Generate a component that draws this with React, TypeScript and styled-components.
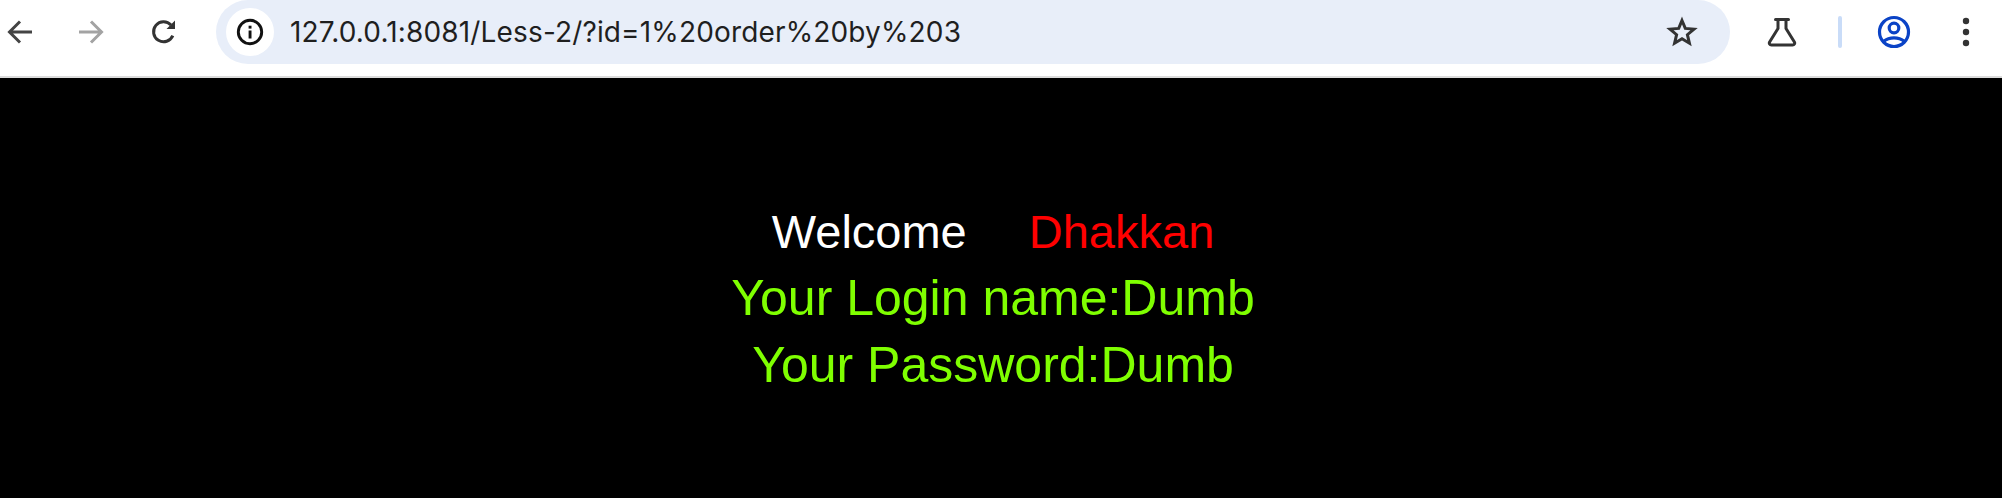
import React from 'react';
import styled, { createGlobalStyle } from 'styled-components';

const GlobalStyle = createGlobalStyle`
  html, body {
    margin: 0;
    padding: 0;
    background: #000;
  }
`;

const Page = styled.div`
  width: 2002px;
  height: 498px;
  display: flex;
  flex-direction: column;
  overflow: hidden;
`;

const Toolbar = styled.div`
  height: 76px;
  flex: none;
  display: flex;
  align-items: flex-start;
  background: #fff;
  border-bottom: 2px solid #dcdcdc;
`;

const NavGroup = styled.div`
  width: 216px;
  height: 64px;
  flex: none;
  display: flex;
  align-items: center;
  padding-left: 2px;
  box-sizing: border-box;
`;

const IconSlot = styled.div<{ $width: number }>`
  width: ${({ $width }) => $width}px;
  height: 64px;
  flex: none;
  display: flex;
  align-items: center;
  justify-content: center;
`;

const AddressBar = styled.div`
  width: 1514px;
  height: 64px;
  flex: none;
  display: flex;
  align-items: center;
  padding: 0 32px 0 10px;
  box-sizing: border-box;
  background: #e8eef9;
  border-radius: 36px;
`;

const InfoBadge = styled.div`
  width: 48px;
  height: 48px;
  flex: none;
  display: flex;
  align-items: center;
  justify-content: center;
  border-radius: 50%;
  background: #fff;
`;

const UrlText = styled.span`
  flex: 1;
  margin-left: 16px;
  font-family: Inter, 'Liberation Sans', sans-serif;
  font-size: 28px;
  letter-spacing: 0.15px;
  color: #1f1f1f;
  white-space: nowrap;
`;

const ActionGroup = styled.div`
  flex: 1;
  height: 64px;
  display: flex;
  align-items: center;
`;

const Divider = styled.div`
  width: 4px;
  height: 32px;
  flex: none;
  margin: 0 35px 0 4px;
  border-radius: 2px;
  background: #c9dcf8;
`;

const Content = styled.div`
  flex: 1;
  display: flex;
  flex-direction: column;
  align-items: center;
  padding: 120px 16px 0 0;
  background: #000;
  font-family: 'Liberation Sans', Arial, sans-serif;
  line-height: 67px;
`;

const WelcomeLine = styled.div`
  display: flex;
  gap: 62px;
  font-size: 47px;
  color: #fff;
`;

const Name = styled.span`
  color: #ff0000;
`;

const InfoLine = styled.div`
  font-size: 50px;
  color: #7fff00;
`;

const ArrowIcon = ({ flip, color }: { flip?: boolean; color: string }) => (
  <svg width="28" height="28" viewBox="0 0 28 28" fill="none" stroke={color} strokeWidth="3">
    <g transform={flip ? 'rotate(180 14 14)' : undefined}>
      <path d="M26 14H4M14 3.5 3.5 14 14 24.5" />
    </g>
  </svg>
);

const ReloadIcon = () => (
  <svg width="28" height="28" viewBox="0 0 28 28" fill="none">
    <path d="M22.8 17.6A10 10 0 1 1 21 7" stroke="#333" strokeWidth="3" />
    <path d="M25 2.5V11h-8.5z" fill="#333" />
  </svg>
);

const InfoIcon = () => (
  <svg width="28" height="28" viewBox="0 0 28 28" fill="none">
    <circle cx="14" cy="14" r="11.7" stroke="#111" strokeWidth="2.9" />
    <rect x="12.6" y="12.5" width="2.9" height="8" fill="#111" />
    <rect x="12.6" y="7.7" width="2.9" height="2.9" fill="#111" />
  </svg>
);

const StarIcon = () => (
  <svg width="32" height="32" viewBox="0 0 32 32" fill="none">
    <path
      d="M16 4.5 19.3 12.4 28 13.1 21.4 18.7 23.4 27.2 16 22.7 8.6 27.2 10.6 18.7 4 13.1 12.7 12.4Z"
      stroke="#333"
      strokeWidth="3"
      strokeLinejoin="miter"
    />
  </svg>
);

const FlaskIcon = () => (
  <svg width="30" height="30" viewBox="0 0 30 30" fill="none" stroke="#333" strokeWidth="3">
    <path d="M8.5 2.5h13" strokeLinecap="round" />
    <path d="M11 3v8.5L2.6 25c-.8 1.4.1 3 1.8 3h21.2c1.7 0 2.6-1.6 1.800-3L19 11.500V3" strokeLinejoin="round" />
  </svg>
);

const ProfileIcon = () => (
  <svg width="34" height="34" viewBox="0 0 34 34" fill="none" stroke="#0b43c6" strokeWidth="3.2">
    <circle cx="17" cy="17" r="14.5" />
    <circle cx="17" cy="13" r="4.8" />
    <path d="M6.500 26.500c6-4.800 15-4.800 21 0" />
  </svg>
);

const MoreIcon = () => (
  <svg width="8" height="30" viewBox="0 0 8 30" fill="#333">
    <circle cx="4" cy="4" r="3.2" />
    <circle cx="4" cy="15" r="3.2" />
    <circle cx="4" cy="26" r="3.2" />
  </svg>
);

const App: React.FC = () => (
  <Page>
    <GlobalStyle />
    <Toolbar>
      <NavGroup>
        <IconSlot $width={36}>
          <ArrowIcon color="#444" />
        </IconSlot>
        <IconSlot $width={106}>
          <ArrowIcon flip color="#a3a3a3" />
        </IconSlot>
        <IconSlot $width={40}>
          <ReloadIcon />
        </IconSlot>
      </NavGroup>
      <AddressBar>
        <InfoBadge>
          <InfoIcon />
        </InfoBadge>
        <UrlText>127.0.0.1:8081/Less-2/?id=1%20order%20by%203</UrlText>
        <IconSlot $width={32}>
          <StarIcon />
        </IconSlot>
      </AddressBar>
      <ActionGroup>
        <IconSlot $width={104}>
          <FlaskIcon />
        </IconSlot>
        <Divider />
        <IconSlot $width={34}>
          <ProfileIcon />
        </IconSlot>
        <IconSlot $width={110}>
          <MoreIcon />
        </IconSlot>
      </ActionGroup>
    </Toolbar>
    <Content>
      <WelcomeLine>
        <span>Welcome</span>
        <Name>Dhakkan</Name>
      </WelcomeLine>
      <InfoLine>Your Login name:Dumb</InfoLine>
      <InfoLine>Your Password:Dumb</InfoLine>
    </Content>
  </Page>
);

export default App;
